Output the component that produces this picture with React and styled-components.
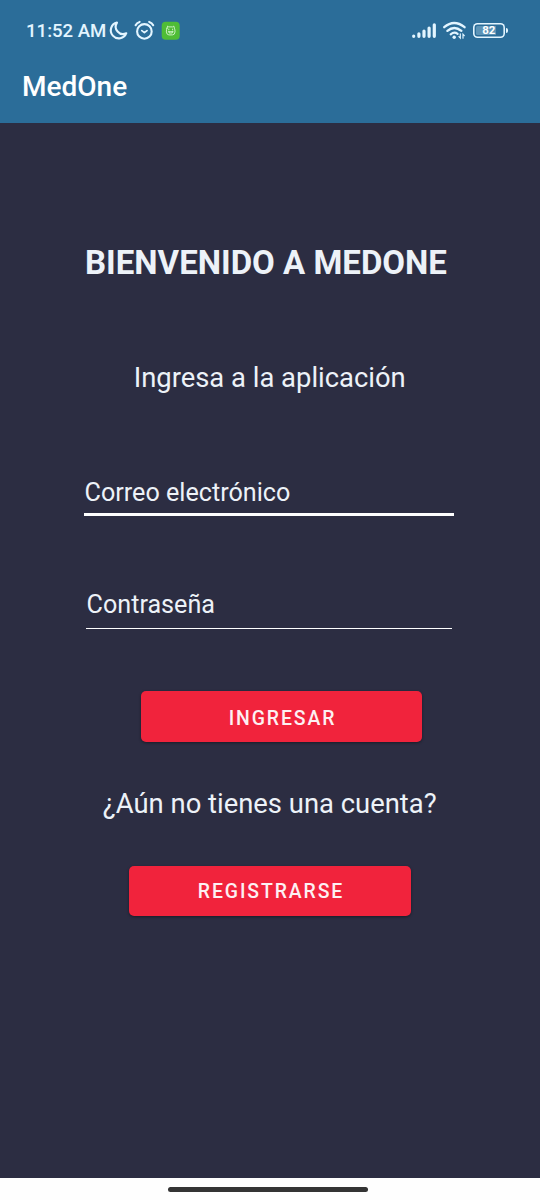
import React from 'react';
import styled, { createGlobalStyle } from 'styled-components';

const GlobalStyle = createGlobalStyle`
  * { box-sizing: border-box; }
  body { margin: 0; background: #fefefe; font-family: Roboto, sans-serif; }
`;

const Screen = styled.div`
  display: flex;
  flex-direction: column;
  width: 540px;
  height: 1200px;
  overflow: hidden;
  background: #2c2d42;
`;

const Header = styled.header`
  height: 123px;
  flex: none;
  background: #2b6d99;
  color: #fff;
`;

const StatusBar = styled.div`
  display: flex;
  align-items: center;
  justify-content: space-between;
  height: 50px;
  padding: 11px 33px 0 26px;
`;

const StatusGroup = styled.div`
  display: flex;
  align-items: center;
  gap: ${(p) => p.$gap}px;
  height: 38px;
`;

const Clock = styled.span`
  width: 79px;
  margin-right: -3.5px;
  font-size: 18.6px;
  font-weight: 500;
  line-height: 38px;
  white-space: nowrap;
  color: #e3f5ff;
`;

const Icon = styled.svg`
  display: block;
  flex: none;
  overflow: visible;
`;

const Battery = styled.div`
  position: relative;
  display: flex;
  align-items: center;
  justify-content: center;
  width: 31.5px;
  height: 15px;
  margin-right: 2.5px;
  padding: 3px;
  border-radius: 4.5px;
  background: linear-gradient(90deg, #5c93b6 78%, transparent 78%) content-box;
  box-shadow: inset 0 0 0 1.6px #e3f5ff;
  color: #fff;
  font-size: 11.5px;
  font-weight: 700;
  line-height: 11px;

  &::after {
    content: '';
    position: absolute;
    right: -3px;
    top: 5.2px;
    width: 2px;
    height: 4.5px;
    border-radius: 0 2px 2px 0;
    background: #e3f5ff;
  }
`;

const AppTitle = styled.div`
  padding: 0 0 0 22px;
  font-size: 28px;
  font-weight: 500;
  line-height: 73px;
`;

const Main = styled.main`
  display: flex;
  flex: 1;
  flex-direction: column;
  align-items: center;
  padding-top: 120px;
  color: #edf2f8;
`;

const Heading = styled.h1`
  margin: 0 8px 78px 0;
  font-size: 33px;
  font-weight: 700;
  line-height: 40px;
  white-space: nowrap;
`;

const Message = styled.p`
  margin: 0 0.6px 0 0;
  font-size: 27.4px;
  line-height: 34px;
  white-space: nowrap;
`;

const Field = styled.input`
  display: block;
  width: ${(p) => (p.$active ? 370 : 366)}px;
  height: ${(p) => (p.$active ? 43 : 42)}px;
  margin-right: 2px;
  margin-top: ${(p) => p.$top}px;
  padding: 0 0 ${(p) => (p.$active ? 0 : 6)}px 0.6px;
  border: 0;
  border-bottom: ${(p) => (p.$active ? 3 : 1.5)}px solid #fff;
  border-radius: 0;
  outline: 0;
  background: transparent;
  font-family: inherit;
  font-size: 25.15px;
  color: #edf2f8;

  &::placeholder {
    color: #edf2f8;
    opacity: 1;
  }
`;

const Button = styled.button`
  width: ${(p) => p.$width}px;
  height: ${(p) => p.$height}px;
  margin: ${(p) => p.$margin};
  padding: ${(p) => p.$inset}px 0 0 2px;
  border: 0;
  border-radius: 5px;
  background: #f1233c;
  box-shadow: 0 1px 3px rgba(0, 0, 0, 0.4);
  color: #fdf0f3;
  font-family: inherit;
  font-size: 19.4px;
  font-weight: 500;
  line-height: 24px;
  letter-spacing: 1.9px;
`;

const NavBar = styled.footer`
  display: flex;
  justify-content: center;
  flex: none;
  height: 22px;
  padding-top: 8.5px;
  background: #fefefe;
`;

const HomeHandle = styled.div`
  width: 200px;
  height: 5px;
  margin-right: 4px;
  border-radius: 3px;
  background: #343434;
`;

const MoonIcon = () => (
  <Icon width="19" height="20" viewBox="0 0 19 20">
    <path
      d="M8 1.6A8 8 0 1 0 17.3 12.2A7.3 7.3 0 0 1 8 1.6Z"
      fill="none" stroke="#e3f5ff" strokeWidth="2.1" strokeLinejoin="round"
    />
  </Icon>
);

const AlarmIcon = () => (
  <Icon width="20" height="20" viewBox="0.6 0.6 20 20" fill="none" stroke="#e3f5ff" strokeLinecap="round">
    <circle cx="10" cy="11" r="7.3" strokeWidth="2.1" />
    <path d="M1.2 4.8Q2.4 2.3 5.2 1.5M18.8 4.8Q17.6 2.3 14.8 1.5" strokeWidth="2.1" />
    <path d="M7.4 10.2L10 12.2L12.6 10.2" strokeWidth="1.8" strokeLinejoin="round" />
  </Icon>
);

const PetIcon = () => (
  <Icon width="18" height="18" viewBox="0.3 0.3 18 18">
    <rect width="18" height="18" rx="4" fill="#4fbd36" />
    <g fill="none" stroke="#d9f6d3" strokeWidth="0.9" strokeLinecap="round" strokeLinejoin="round">
      <path d="M5.3 6.5L5.9 4.4L7 5.2H11L12.1 4.4L12.7 6.5Q13.4 8 13.3 10.2Q13 13.2 10.8 13.2H7.2Q5 13.2 4.7 10.2Q4.6 8 5.3 6.5Z" />
      <path d="M7.1 7.4V8.2M10.9 7.4V8.2M6.6 10H11.4M7.4 10V11.3H10.6V10" />
    </g>
  </Icon>
);

const SignalIcon = () => (
  <Icon width="24" height="15" viewBox="0 0 24 15">
    <path
      d="M1.7 13.1V13.3M6.9 10.8V13.3M12 8V13.3M17.1 5V13.3M22.3 1.8V13.3"
      stroke="#e3f5ff" strokeWidth="3.2" strokeLinecap="round"
    />
  </Icon>
);

const WifiIcon = () => (
  <Icon width="23" height="18" viewBox="0 0.4 23 18" fill="none" stroke="#e3f5ff" strokeLinecap="round">
    <path d="M1.2 5.6Q11 -2.8 21.6 5.6" strokeWidth="2.3" />
    <path d="M4.4 9.3Q11.2 3.5 18.4 9.3" strokeWidth="2.3" />
    <path d="M7.7 12.7Q11.3 9.7 14.6 12.2" strokeWidth="2.2" />
    <circle cx="11.2" cy="15.6" r="1.7" fill="#e3f5ff" stroke="none" />
    <path d="M17.3 12.3V16.4L15.9 15M20 16.6V12.6L21.3 14" strokeWidth="1.2" />
  </Icon>
);

export default function App() {
  return (
    <Screen>
      <GlobalStyle />
      <Header>
        <StatusBar>
          <StatusGroup $gap={7}>
            <Clock>11:52 AM</Clock>
            <MoonIcon />
            <AlarmIcon />
            <PetIcon />
          </StatusGroup>
          <StatusGroup $gap={7}>
            <SignalIcon />
            <WifiIcon />
            <Battery>82</Battery>
          </StatusGroup>
        </StatusBar>
        <AppTitle>MedOne</AppTitle>
      </Header>
      <Main>
        <Heading>BIENVENIDO A MEDONE</Heading>
        <Message>Ingresa a la aplicación</Message>
        <Field $active $top={77.5} type="email" placeholder="Correo electrónico" />
        <Field $top={71} type="password" placeholder="Contraseña" />
        <Button $width={281} $height={51.5} $inset={5} $margin="62px 0 44.5px 23px">INGRESAR</Button>
        <Message>¿Aún no tienes una cuenta?</Message>
        <Button $width={282} $height={50} $inset={2} $margin="45px 0 0">REGISTRARSE</Button>
      </Main>
      <NavBar>
        <HomeHandle />
      </NavBar>
    </Screen>
  );
}
